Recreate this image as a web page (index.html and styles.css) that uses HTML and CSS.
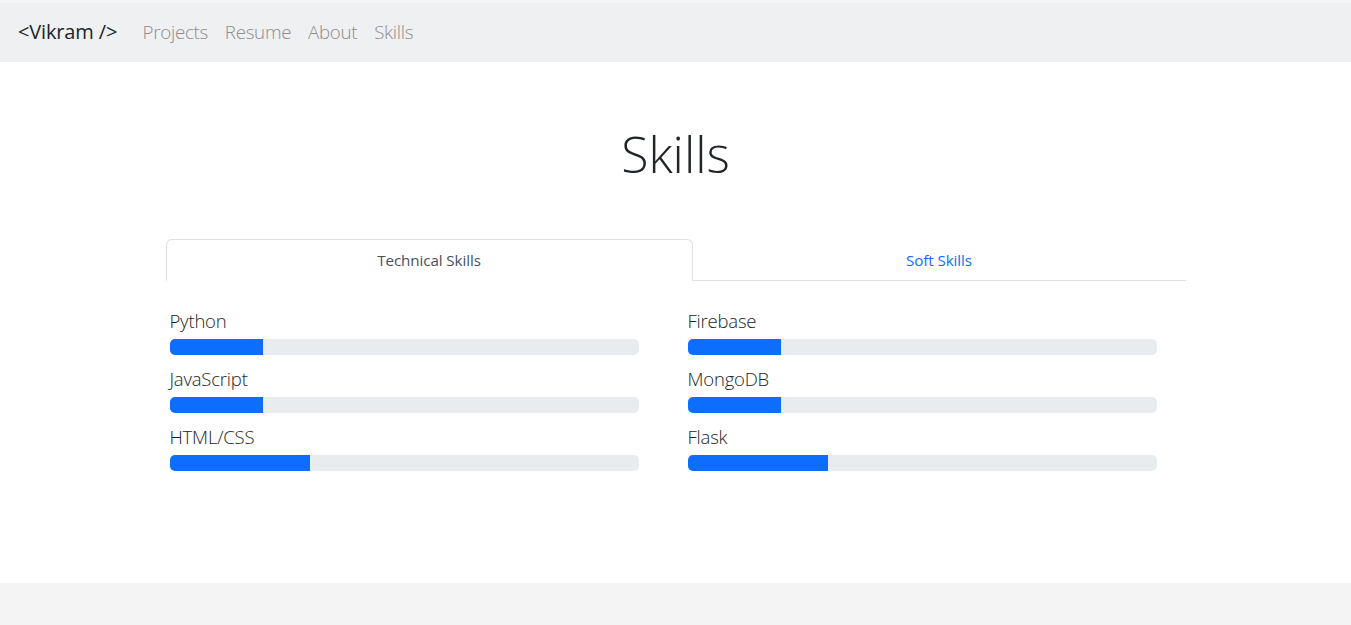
FILE: index.html
```html
<!DOCTYPE html>
<html lang="en">
<head>
<meta charset="utf-8">
<title>Skills</title>
<link rel="stylesheet" href="styles.css">
</head>
<body>
<nav class="navbar">
  <a class="brand" href="#">&lt;Vikram /&gt;</a>
  <ul class="nav-links">
    <li><a href="#">Projects</a></li>
    <li><a href="#">Resume</a></li>
    <li><a href="#">About</a></li>
    <li><a href="#">Skills</a></li>
  </ul>
</nav>
<main class="main">
  <h1 class="title">Skills</h1>
  <div class="panel">
    <div class="tabs">
      <a class="tab active" href="#">Technical Skills</a>
      <a class="tab" href="#">Soft Skills</a>
    </div>
    <div class="skills">
      <div class="skill"><div class="label">Python</div><div class="bar"><div class="fill" style="width:20%"></div></div></div>
      <div class="skill"><div class="label">Firebase</div><div class="bar"><div class="fill" style="width:20%"></div></div></div>
      <div class="skill"><div class="label">JavaScript</div><div class="bar"><div class="fill" style="width:20%"></div></div></div>
      <div class="skill"><div class="label">MongoDB</div><div class="bar"><div class="fill" style="width:20%"></div></div></div>
      <div class="skill"><div class="label">HTML/CSS</div><div class="bar"><div class="fill" style="width:30%"></div></div></div>
      <div class="skill"><div class="label">Flask</div><div class="bar"><div class="fill" style="width:30%"></div></div></div>
    </div>
  </div>
</main>
<footer class="footer"></footer>
</body>
</html>
```
FILE: styles.css
```css
* { box-sizing: border-box; }
html, body { margin: 0; padding: 0; }
body {
  font-family: "Open Sans", "Noto Sans", sans-serif;
  color: #212529;
  background: #f4f4f4;
}
a { text-decoration: none; }

.navbar {
  height: 62px;
  background: #eff0f2;
  display: flex;
  align-items: center;
  padding: 0 18px 2px;
  border-top: 3px solid #f4f5f6;
}
.brand {
  font-size: 20px;
  font-weight: 400;
  color: #212529;
  margin-right: 17px;
  letter-spacing: -0.15px;
}
.nav-links {
  list-style: none;
  margin: 0;
  padding: 0;
  display: flex;
}
.nav-links a {
  display: block;
  padding: 0 8.4px;
  font-size: 18.8px;
  font-weight: 300;
  color: #8c8d8f;
  letter-spacing: -0.3px;
}

.main {
  background: #fff;
  height: 521px;
  padding-top: 57px;
}
.title {
  margin: 0;
  text-align: center;
  font-size: 50px;
  font-weight: 300;
  line-height: 70px;
  color: #212529;
}
.panel {
  width: 1020px;
  margin: 50px auto 0;
}
.tabs {
  display: flex;
  border-bottom: 1px solid #dee2e6;
}
.tab {
  height: 42px;
  display: flex;
  align-items: center;
  justify-content: center;
  font-size: 15.2px;
  color: #0d6efd;
  border: 1px solid transparent;
  border-top-left-radius: 6px;
  border-top-right-radius: 6px;
  margin-bottom: -1px;
  letter-spacing: -0.1px;
}
.tab:first-child { width: 527px; }
.tab:last-child { flex: 1; }
.tab.active {
  color: #495057;
  background: #fff;
  border-color: #dee2e6 #dee2e6 #fff;
}
.skills {
  display: grid;
  grid-template-columns: 469px 469px;
  column-gap: 49px;
  row-gap: 11px;
  padding: 27px 0 0 4px;
}
.label {
  font-size: 18.5px;
  font-weight: 300;
  line-height: 26px;
  margin-bottom: 5px;
  color: #212529;
  letter-spacing: -0.2px;
}
.bar {
  height: 16px;
  background: #e9ecef;
  border-radius: 5px;
  overflow: hidden;
}
.fill {
  height: 100%;
  background: #0d6efd;
}
.footer {
  height: 42px;
  background: #f4f4f4;
}
```
